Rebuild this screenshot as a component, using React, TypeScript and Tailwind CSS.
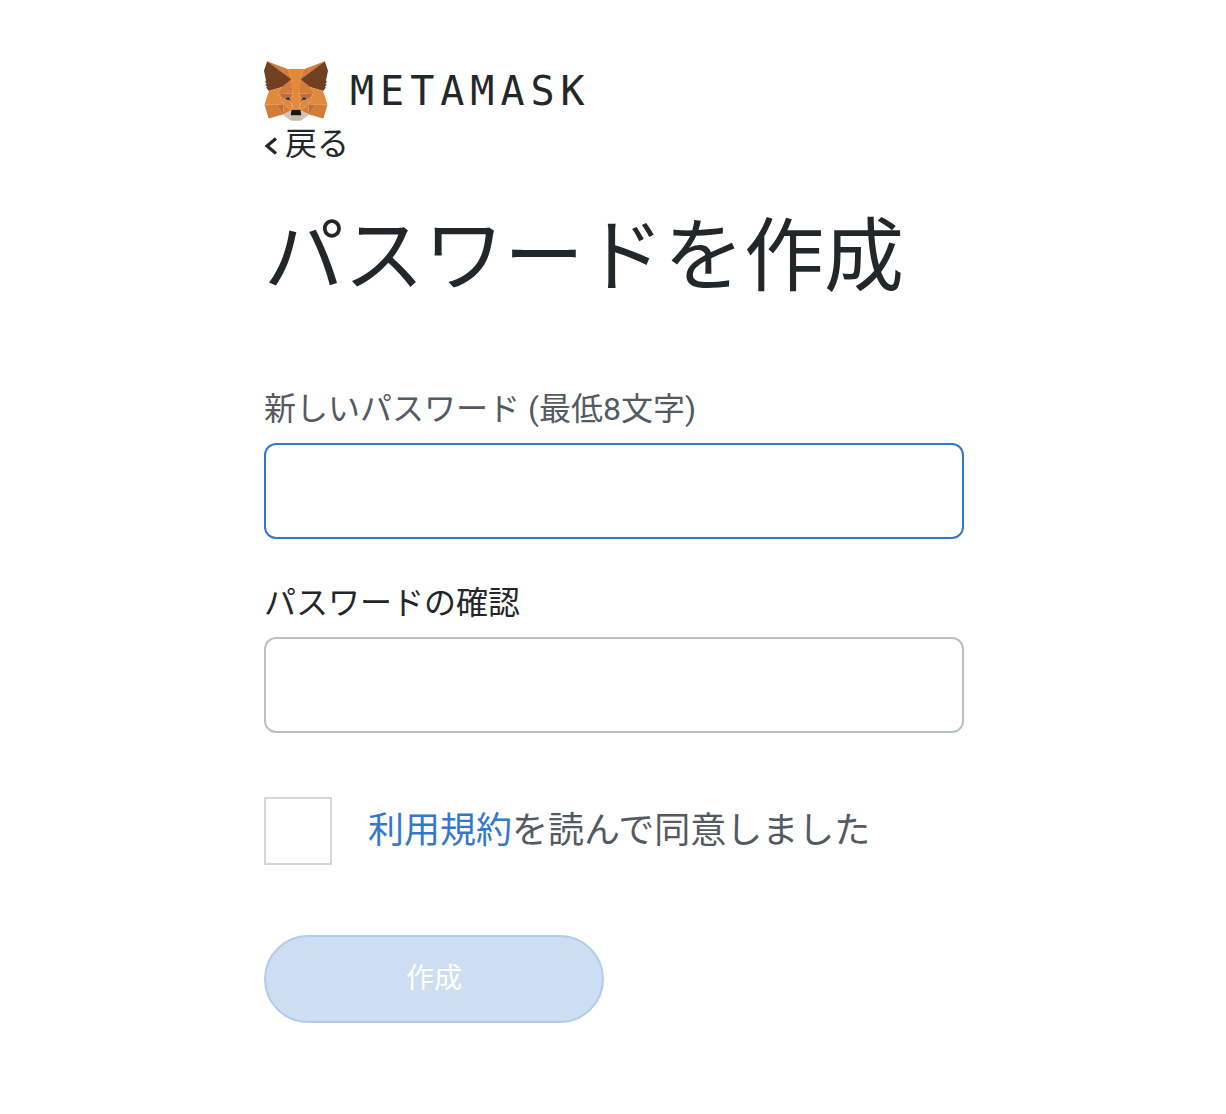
import React, { useState } from "react";

const FoxLogo: React.FC = () => (
  <svg
    viewBox="31.8 35.5 255 236.4"
    className="w-16 h-[60px] shrink-0"
    aria-hidden="true"
  >
    <path
      fill="#d57c38"
      d="M274.1 35.5l-99.5 73.9L193 65.8zM44.4 35.5l98.7 74.6-17.5-44.3zm193.9 171.3l-26.5 40.6 56.7 15.6 16.3-55.3zm-204.4.9L50.1 263l56.7-15.6-26.5-40.6zM103.6 138.2l-15.8 23.9 56.3 2.5-2-60.5zm111.3 0l-39-34.8-1.3 61.2 56.2-2.5zM106.8 247.4l33.8-16.5-29.2-22.8zm71.1-16.5l33.9 16.5-4.7-39.3z"
    />
    <path
      fill="#d3c2b5"
      d="M211.8 247.4l-33.9-16.5 2.7 22.1-.3 9.3zm-105 0l31.5 14.9-.2-9.3 2.5-22.1z"
    />
    <path
      fill="#263649"
      d="M138.8 193.5l-28.2-8.3 19.9-9.1zm40.9 0l8.3-17.4 20 9.1z"
    />
    <path
      fill="#c56c35"
      d="M106.8 247.4l4.8-40.6-31.3.9zM207 206.8l4.8 40.6 26.5-39.7zm23.8-44.7l-56.2 2.5 5.2 28.9 8.3-17.4 20 9.1zm-120.2 23.1l20-9.1 8.2 17.4 5.3-28.9-56.3-2.5z"
    />
    <path
      fill="#d67d39"
      d="M87.8 162.1l23.6 46-.8-22.9zm120.3 23.1l-1 22.9 23.7-46zm-64-20.6l-5.3 28.9 6.6 34.1 1.5-44.9zm30.5 0l-2.7 18 1.2 45 6.7-34.1z"
    />
    <path
      fill="#e18a3c"
      d="M179.8 193.5l-6.7 34.1 4.8 3.3 29.2-22.8 1-22.9zm-69.2-8.3l.8 22.9 29.2 22.8 4.8-3.3-6.6-34.1z"
    />
    <path
      fill="#c9b9aa"
      d="M180.3 262.3l.3-9.3-2.5-2.2h-37.7l-2.3 2.2.2 9.3-31.5-14.9 11 9 22.3 15.5h38.3l22.4-15.5 11-9z"
    />
    <path
      fill="#161616"
      d="M177.9 230.9l-4.8-3.3h-27.7l-4.8 3.3-2.5 22.1 2.3-2.2h37.7l2.5 2.2z"
    />
    <path
      fill="#704020"
      d="M278.3 114.2l8.5-40.8-12.7-37.9-96.2 71.4 37 31.3 52.3 15.3 11.6-13.5-5-3.6 8-7.3-6.2-4.8 8-6.1zM31.8 73.4l8.5 40.8-5.4 4 8 6.1-6.1 4.8 8 7.3-5 3.6 11.5 13.5 52.3-15.3 37-31.3-96.2-71.4z"
    />
    <path
      fill="#e18a3c"
      d="M267.2 153.5l-52.3-15.3 15.9 23.9-23.7 46 31.2-.4h46.5zm-163.6-15.3l-52.3 15.3-17.4 54.2h46.4l31.1.4-23.6-46zm71 26.4l3.3-57.7 15.2-41.1h-67.5l15 41.1 3.5 57.7 1.2 18.2.1 44.8h27.7l.2-44.8z"
    />
  </svg>
);

export default function App() {
  const [password, setPassword] = useState("");
  const [confirmPassword, setConfirmPassword] = useState("");
  const [termsChecked, setTermsChecked] = useState(false);

  const isValid =
    password.length >= 8 && password === confirmPassword && termsChecked;

  return (
    <main
      lang="ja"
      className="mx-auto max-w-[702px] pl-0.5 pt-[61px] pb-20 bg-white text-[#24272a] font-[Roboto,'Noto_Sans_CJK_JP',sans-serif]"
    >
      {/* Logo */}
      <div className="flex items-center h-[60px] gap-[22px]">
        <FoxLogo />
        <span className="text-[40px] leading-[60px] tracking-[6px] font-['DejaVu_Sans_Mono',monospace]">
          METAMASK
        </span>
      </div>

      <button
        type="button"
        className="flex items-center gap-2 text-[32px] leading-[46px] cursor-pointer"
      >
        <svg
          viewBox="0 0 13 18"
          className="w-[13px] h-[18px] mt-1"
          fill="none"
          stroke="currentColor"
          strokeWidth="3.2"
          aria-hidden="true"
        >
          <path d="M12 1.5L3 9l9 7.5" />
        </svg>
        戻る
      </button>

      <h1 className="mt-[30px] text-[80px] leading-[120px]">
        パスワードを作成
      </h1>

      <form className="mt-[68px]" onSubmit={(e) => e.preventDefault()}>
        {/* New password */}
        <label
          htmlFor="create-password"
          className="block text-[32px] leading-[48px] text-[#535a61]"
        >
          新しいパスワード (最低8文字)
        </label>
        <input
          id="create-password"
          type="password"
          value={password}
          onChange={(e) => setPassword(e.target.value)}
          className="block mt-2.5 w-full h-24 px-8 text-[32px] border-2 border-[#3478cc] rounded-xl outline-none"
        />

        {/* Confirm password */}
        <label
          htmlFor="confirm-password"
          className="block mt-10 text-[32px] leading-[48px]"
        >
          パスワードの確認
        </label>
        <input
          id="confirm-password"
          type="password"
          value={confirmPassword}
          onChange={(e) => setConfirmPassword(e.target.value)}
          className="block mt-2.5 w-full h-24 px-8 text-[32px] border-2 border-[#bbc0c5] rounded-xl outline-none focus:border-[#3478cc]"
        />

        {/* Terms */}
        <div className="flex items-center mt-16 gap-9">
          <input
            id="terms"
            type="checkbox"
            checked={termsChecked}
            onChange={(e) => setTermsChecked(e.target.checked)}
            className="appearance-none shrink-0 size-[68px] border-2 border-[#d6d7dd] checked:bg-[#3478cc]"
          />
          <label htmlFor="terms" className="text-[36px] leading-[54px] text-[#535a61]">
            <a href="#terms" className="text-[#3478cc]">
              利用規約
            </a>
            を読んで同意しました
          </label>
        </div>

        <button
          type="submit"
          disabled={!isValid}
          className="mt-[70px] w-[340px] h-[88px] rounded-full border-2 border-[#3478cc] bg-[#3478cc] text-[28px] text-white cursor-pointer disabled:border-[#b0ccec] disabled:bg-[#cdddf2] disabled:cursor-not-allowed"
        >
          作成
        </button>
      </form>
    </main>
  );
}
